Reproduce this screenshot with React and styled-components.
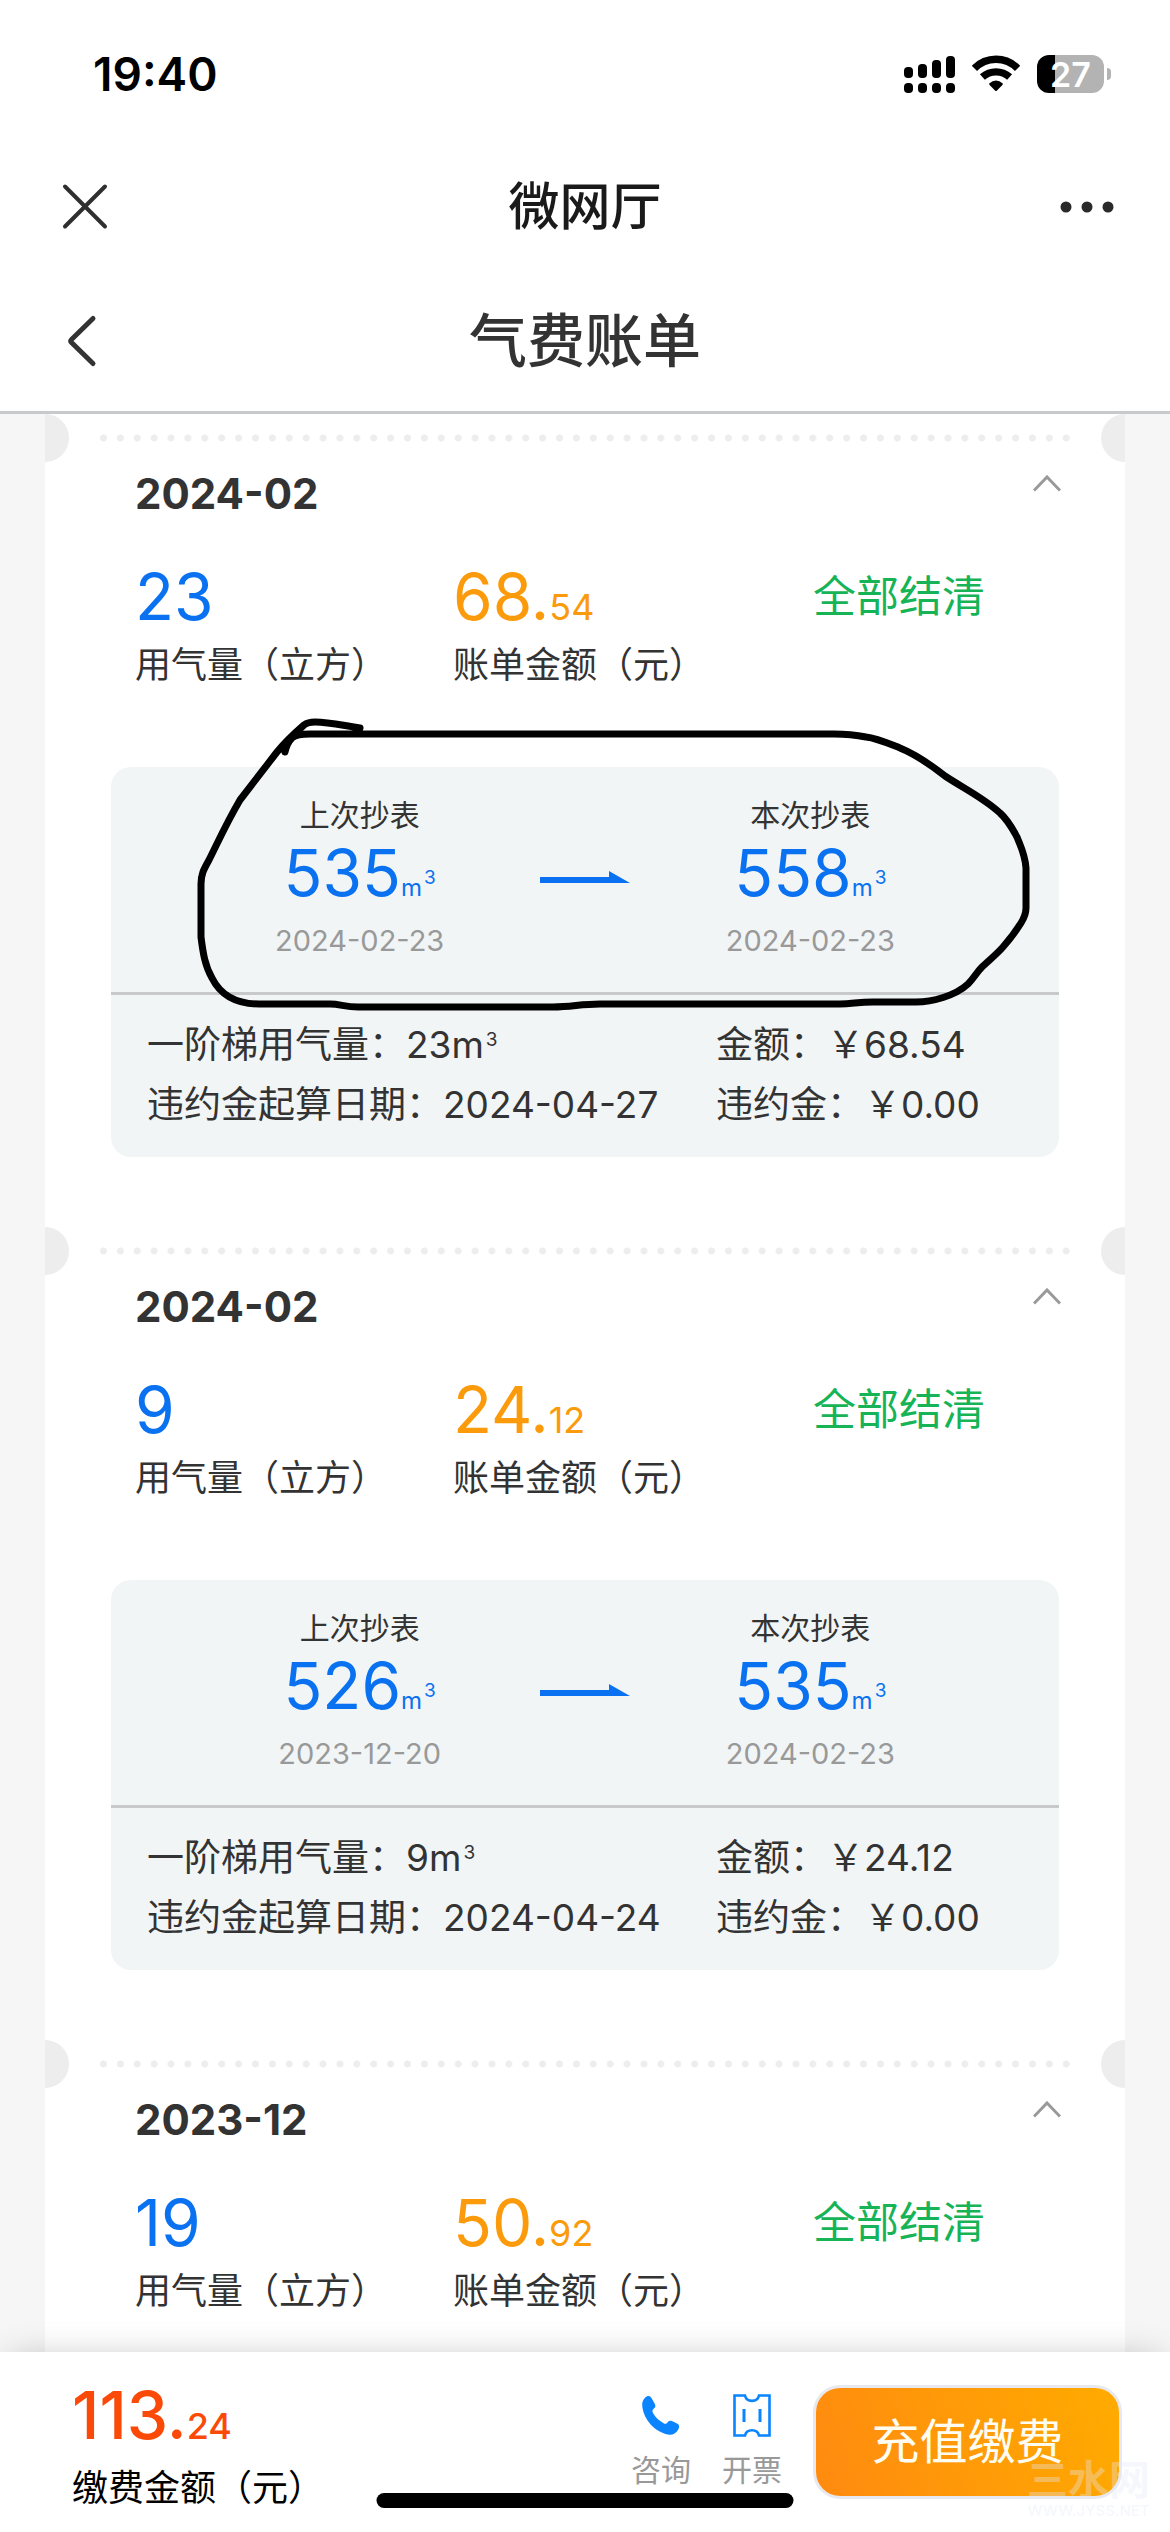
import React from "react";
import styled, { createGlobalStyle, css } from "styled-components";

const color = {
  text: "#333333",
  muted: "#999999",
  blue: "#0a72f0",
  orange: "#fb9a0a",
  green: "#16b357",
  red: "#fb4a08",
  line: "#c8c9cb",
  page: "#f6f6f6",
  notch: "#ededed",
  panel: "#f1f5f6",
};

const GlobalStyle = createGlobalStyle`
  * { box-sizing: border-box; }
  html, body { margin: 0; padding: 0; }
  body {
    background: #ffffff;
    color: ${color.text};
    font-family: Inter, "Noto Sans CJK SC", sans-serif;
    font-size: 36px;
  }
  h1, h2, p, dl, dt, dd { margin: 0; font-weight: inherit; }
  button {
    border: 0;
    padding: 0;
    background: none;
    color: inherit;
    font: inherit;
    cursor: pointer;
  }
`;

const Screen = styled.div`
  position: relative;
  display: flex;
  flex-direction: column;
  height: 100vh;
  overflow: hidden;
  background: ${color.page};
`;

const Top = styled.header`
  flex: none;
  background: #ffffff;
  border-bottom: 3px solid ${color.line};
`;

const StatusBar = styled.div`
  display: flex;
  align-items: center;
  justify-content: space-between;
  height: 148px;
  padding: 0 58px 0 93px;
  color: #000000;
`;

const Clock = styled.time`
  font-size: 46px;
  font-weight: 600;
`;

const Indicators = styled.div`
  display: flex;
  align-items: center;
  gap: 17px;
`;

const Battery = styled.div`
  position: relative;
  display: flex;
  align-items: center;
  justify-content: center;
  width: 67px;
  height: 38px;
  margin-right: 8px;
  border-radius: 12px;
  background: linear-gradient(90deg, #000000 27%, #b3b3b3 27%);
  color: #ffffff;
  font-size: 34px;
  font-weight: 600;

  &::after {
    content: "";
    position: absolute;
    right: -7px;
    top: 13px;
    width: 4px;
    height: 12px;
    border-radius: 0 6px 6px 0;
    background: #b3b3b3;
  }
`;

const TitleBar = styled.div`
  display: grid;
  grid-template-columns: 120px 1fr 120px;
  align-items: center;
  height: 118px;
  padding: 0 56px;
`;

const PageBar = styled(TitleBar)`
  height: 145px;
  padding-top: 4px;
`;

const IconButton = styled.button`
  display: flex;
  align-items: center;
  justify-self: ${(p) => p.$side || "start"};
  height: 60px;
`;

const AppName = styled.p`
  text-align: center;
  font-size: 51px;
  font-weight: 500;
  line-height: 60px;
  color: #1a1a1a;
`;

const PageTitle = styled.h1`
  text-align: center;
  font-size: 58px;
  font-weight: 500;
  line-height: 60px;
`;

const Bills = styled.main`
  flex: 1;
  min-height: 0;
  overflow: hidden;
  margin: 0 45px;
  background: #ffffff;
`;

const Bill = styled.article`
  position: relative;
  padding-bottom: 70px;
`;

const Perforation = styled.div`
  display: flex;
  align-items: center;
  justify-content: space-between;
  gap: 26px;
  overflow: hidden;

  &::before,
  &::after {
    content: "";
    width: 24px;
    height: 48px;
    background: ${color.notch};
  }
  &::before { border-radius: 0 24px 24px 0; }
  &::after { border-radius: 24px 0 0 24px; }
`;

const Dots = styled.div`
  flex: 1;
  height: 8px;
  background: radial-gradient(circle, ${color.notch} 3px, transparent 4px) 0 0 / 17px 8px round;
`;

const BillHead = styled.div`
  display: flex;
  align-items: center;
  justify-content: space-between;
  padding: 2px 64px 40px 90px;
`;

const Month = styled.h2`
  font-size: 42px;
  font-weight: 700;
  line-height: 60px;
`;

const Toggle = styled.button`
  display: flex;
  align-items: flex-start;
  height: 38px;
`;

const Summary = styled.div`
  display: grid;
  grid-template-columns: 318fr 360fr 312fr;
  padding-left: 90px;
`;

const Metric = styled.dl`
  display: flex;
  flex-direction: column-reverse;
  justify-content: flex-end;
  gap: ${(p) => p.$gap || 11}px;
`;

const Caption = styled.dt`
  line-height: 48px;
  white-space: nowrap;
`;

const Figure = styled.dd`
  line-height: 66px;
  height: 66px;
  font-size: ${(p) => p.$size || 64}px;
  font-weight: ${(p) => p.$weight || 400};
  color: ${(p) => p.$tone};
`;

const Cents = styled.span`
  font-size: 36px;
`;

const Settled = styled.p`
  font-size: 43px;
  line-height: 64px;
  color: ${color.green};
`;

const Panel = styled.section`
  margin: 78px 66px 0;
  border-radius: 20px;
  background: ${color.panel};
`;

const Readings = styled.div`
  display: grid;
  grid-template-columns: repeat(3, 1fr);
  padding: 27px 136px 30px;
  border-bottom: 3px solid ${color.line};
`;

const Reading = styled.div`
  display: flex;
  flex-direction: column;
  align-items: center;
  white-space: nowrap;
`;

const ReadingLabel = styled.p`
  font-size: 30px;
  line-height: 42px;
`;

const ReadingValue = styled.p`
  margin: 4px 0 14px;
  height: 66px;
  font-size: 64px;
  line-height: 66px;
  color: ${color.blue};
`;

const unitStyle = css`
  sup {
    font-size: 19px;
    line-height: 1;
    vertical-align: baseline;
    position: relative;
    top: -12px;
    margin-left: 2px;
  }
`;

const Unit = styled.span`
  font-size: 24px;
  ${unitStyle}
`;

const ReadingDate = styled.p`
  font-size: 29px;
  line-height: 42px;
  color: ${color.muted};
`;

const ArrowCell = styled.div`
  display: flex;
  justify-content: center;
  padding-top: 77px;
`;

const Terms = styled.div`
  display: grid;
  grid-template-columns: 569fr 343fr;
  padding: 20px 0 22px 36px;
`;

const Term = styled.p`
  line-height: 60px;
  font-size: 37px;
  white-space: nowrap;
  ${unitStyle}
`;

const Scribble = styled.svg`
  position: absolute;
  left: 145px;
  top: 296px;
  pointer-events: none;
`;

const Footer = styled.footer`
  position: relative;
  flex: none;
  display: flex;
  align-items: flex-start;
  height: 180px;
  padding: 30px 51px 0 72px;
  background: #ffffff;
  box-shadow: 0 0 36px -10px rgba(0, 0, 0, 0.3);
`;

const Due = styled(Metric)`
  margin-right: auto;
  color: #000000;
`;

const Actions = styled.nav`
  display: flex;
  gap: 31px;
  margin-right: 34px;
  padding-top: 11px;
`;

const Action = styled.button`
  display: flex;
  flex-direction: column;
  align-items: center;
  gap: 8px;
  font-size: 30px;
  line-height: 42px;
  color: ${color.muted};
`;

const PayButton = styled.button`
  width: 303px;
  height: 108px;
  margin-top: 6px;
  border-radius: 24px;
  background: linear-gradient(70deg, #ff8a10, #ffab00);
  box-shadow: 0 0 0 3px #e8e9f0;
  color: #fffdf2;
  font-size: 48px;
  line-height: 60px;
`;

const HomeIndicator = styled.div`
  position: absolute;
  left: 50%;
  bottom: 24px;
  width: 417px;
  height: 15px;
  transform: translateX(-50%);
  border-radius: 8px;
  background: #000000;
`;

const Watermark = styled.div`
  position: absolute;
  right: 20px;
  bottom: 13px;
  display: flex;
  flex-direction: column;
  align-items: center;
  color: rgba(228, 234, 248, 0.36);
  font-size: 41px;
  font-weight: 700;
  line-height: 46px;
  pointer-events: none;

  small {
    font-size: 15px;
    font-weight: 500;
    line-height: 16px;
  }
`;

const SignalIcon = () => (
  <svg width="51" height="38" viewBox="0 0 51 38" aria-hidden="true">
    {[11, 8, 4, 0].map((top, i) => (
      <g key={top}>
        <rect x={i * 14} y={top + 1} width="9" height={22 - top} rx="4" />
        <rect x={i * 14} y="28" width="9" height="10" rx="4" />
      </g>
    ))}
  </svg>
);

const WifiIcon = () => (
  <svg width="48" height="38" viewBox="0 0 48 38" aria-hidden="true">
    <g fill="none" stroke="#000" strokeWidth="7.4">
      <path d="M2.4 13.4A30 30 0 0 1 45.6 13.4" />
      <path d="M10.4 22A20.5 20.5 0 0 1 37.6 22" />
    </g>
    <path d="M17.2 28.6Q24 22.4 30.8 28.6Q31 29.4 30.4 30L25 35.6Q24 36.6 23 35.6L17.6 30Q17 29.4 17.2 28.6Z" />
  </svg>
);

const CloseIcon = () => (
  <svg width="56" height="56" viewBox="0 0 56 56" aria-hidden="true">
    <path d="M9 7.500L49 47.500M49 7.500L9 47.500" stroke="#2f2f2f" strokeWidth="4" strokeLinecap="round" />
  </svg>
);

const MoreIcon = () => (
  <svg width="54" height="12" viewBox="0 0 54 12" fill="#2a2a2a" aria-hidden="true">
    <circle cx="6" cy="6" r="5.500" />
    <circle cx="27" cy="6" r="5.500" />
    <circle cx="48" cy="6" r="5.500" />
  </svg>
);

const BackIcon = () => (
  <svg width="48" height="56" viewBox="0 0 48 56" aria-hidden="true">
    <path d="M37 5.500L15.500 26.500Q14 28 15.500 29.500L37 50.500" fill="none" stroke="#333" strokeWidth="5" strokeLinecap="round" />
  </svg>
);

const CollapseIcon = () => (
  <svg width="28" height="17" viewBox="0 0 28 17" aria-hidden="true">
    <path d="M1 15.500L14 2L27 15.500" fill="none" stroke="#999" strokeWidth="3" />
  </svg>
);

const ArrowIcon = () => (
  <svg width="90" height="12" viewBox="0 0 90 12" aria-hidden="true">
    <path d="M0 6H69V0L90 12H0Z" fill={color.blue} />
  </svg>
);

const PhoneIcon = () => (
  <svg width="42" height="48" viewBox="0 -1 42 48" aria-hidden="true">
    <path
      d="M5 3.800C7.500 1.300 10 1.600 11.600 4.200L14.600 9.400C16 12 15.500 13.200 13.600 14.800C11.800 16.300 12.200 17.800 13.400 19.800C16 24 19.500 27 23.600 29.200C25.400 30.200 26.400 29.800 27.600 28.200C29.200 26.400 30.600 26.200 33 27.400L37 29.600C39.400 31 39.700 32.500 38.500 35C36.400 39.400 32.500 41.400 28 40.600C14.500 37.500 4 26 2.300 12.500C2 9 2.400 6.200 5 3.800Z"
      fill="#0a84ff"
    />
  </svg>
);

const TicketIcon = () => (
  <svg width="38" height="48" viewBox="0 -1 38 48" aria-hidden="true">
    <path
      d="M1.500 1.500H12C13.500 8.600 24.500 8.600 26 1.500H36.500V41.500H26C24.500 34.400 13.500 34.400 12 41.500H1.500Z"
      fill="none"
      stroke="#0a84ff"
      strokeWidth="2.600"
    />
    <path d="M11 15V28M27 15V28" stroke="#0a84ff" strokeWidth="3" />
  </svg>
);

const CircledMark = () => (
  <Scribble width="850" height="310" viewBox="190 710 850 310" aria-hidden="true">
    <path
      d="M360 728C345 726 330 722 315 722Q308 722 304 725C296 732 286 741 277 752L240 800C227 822 218 842 209 860C204 869 201 874 201 884V937C203 953 205 966 212 978C221 996 237 1004 259 1004H330C340 1004 345 1007 358 1007H553C572 1007 580 1004 600 1004H840C852 1004 858 1002 873 1002H916C932 1002 955 996 968 984C975 977 976 973 982 967C988 961 996 955 1003 947C1010 939 1016 931 1021 923Q1026 915 1026 908V868C1025 854 1020 845 1017 837C1012 828 1008 820 1000 813C984 798 963 788 945 776C931 765 917 755 900 748C885 742 876 738 866 737C856 735 844 734 834 734H310Q296 734 292 738Q287 743 285 752"
      fill="none"
      stroke="#000"
      strokeWidth="7"
      strokeLinecap="round"
      strokeLinejoin="round"
    />
  </Scribble>
);

const bills = [
  {
    id: "a",
    month: "2024-02",
    usage: 23,
    amount: "68.54",
    circled: true,
    previous: { value: 535, date: "2024-02-23" },
    current: { value: 558, date: "2024-02-23" },
    penaltyFrom: "2024-04-27",
  },
  {
    id: "b",
    month: "2024-02",
    usage: 9,
    amount: "24.12",
    previous: { value: 526, date: "2023-12-20" },
    current: { value: 535, date: "2024-02-23" },
    penaltyFrom: "2024-04-24",
  },
  { id: "c", month: "2023-12", usage: 19, amount: "50.92" },
];

function Money({ value }) {
  const [whole, cents] = value.split(".");
  return (
    <>
      {whole}.<Cents>{cents}</Cents>
    </>
  );
}

function MeterReading({ label, value, date }) {
  return (
    <Reading>
      <ReadingLabel>{label}</ReadingLabel>
      <ReadingValue>
        {value}
        <Unit>
          m<sup>3</sup>
        </Unit>
      </ReadingValue>
      <ReadingDate>{date}</ReadingDate>
    </Reading>
  );
}

function BillCard({ bill }) {
  return (
    <Bill>
      <Perforation>
        <Dots />
      </Perforation>
      <BillHead>
        <Month>{bill.month}</Month>
        <Toggle aria-label="收起">
          <CollapseIcon />
        </Toggle>
      </BillHead>
      <Summary>
        <Metric>
          <Caption>用气量（立方）</Caption>
          <Figure $tone={color.blue}>{bill.usage}</Figure>
        </Metric>
        <Metric>
          <Caption>账单金额（元）</Caption>
          <Figure $tone={color.orange}>
            <Money value={bill.amount} />
          </Figure>
        </Metric>
        <Settled>全部结清</Settled>
      </Summary>
      {bill.current && (
        <Panel>
          <Readings>
            <MeterReading label="上次抄表" {...bill.previous} />
            <ArrowCell>
              <ArrowIcon />
            </ArrowCell>
            <MeterReading label="本次抄表" {...bill.current} />
          </Readings>
          <Terms>
            <Term>
              一阶梯用气量：{bill.usage}m<sup>3</sup>
            </Term>
            <Term>金额：￥{bill.amount}</Term>
            <Term>违约金起算日期：{bill.penaltyFrom}</Term>
            <Term>违约金：￥0.00</Term>
          </Terms>
        </Panel>
      )}
      {bill.circled && <CircledMark />}
    </Bill>
  );
}

export default function App() {
  return (
    <Screen>
      <GlobalStyle />
      <Top>
        <StatusBar>
          <Clock>19:40</Clock>
          <Indicators>
            <SignalIcon />
            <WifiIcon />
            <Battery>27</Battery>
          </Indicators>
        </StatusBar>
        <TitleBar>
          <IconButton aria-label="关闭">
            <CloseIcon />
          </IconButton>
          <AppName>微网厅</AppName>
          <IconButton aria-label="更多" $side="end">
            <MoreIcon />
          </IconButton>
        </TitleBar>
        <PageBar>
          <IconButton aria-label="返回">
            <BackIcon />
          </IconButton>
          <PageTitle>气费账单</PageTitle>
        </PageBar>
      </Top>
      <Bills>
        {bills.map((bill) => (
          <BillCard key={bill.id} bill={bill} />
        ))}
      </Bills>
      <Footer>
        <Due $gap={16}>
          <Caption>缴费金额（元）</Caption>
          <Figure $tone={color.red} $weight={500} $size={66}>
            <Money value="113.24" />
          </Figure>
        </Due>
        <Actions>
          <Action>
            <PhoneIcon />
            咨询
          </Action>
          <Action>
            <TicketIcon />
            开票
          </Action>
        </Actions>
        <PayButton>充值缴费</PayButton>
        <HomeIndicator />
        <Watermark aria-hidden="true">
          三水网
          <small>WWW.JYSS.NET</small>
        </Watermark>
      </Footer>
    </Screen>
  );
}
